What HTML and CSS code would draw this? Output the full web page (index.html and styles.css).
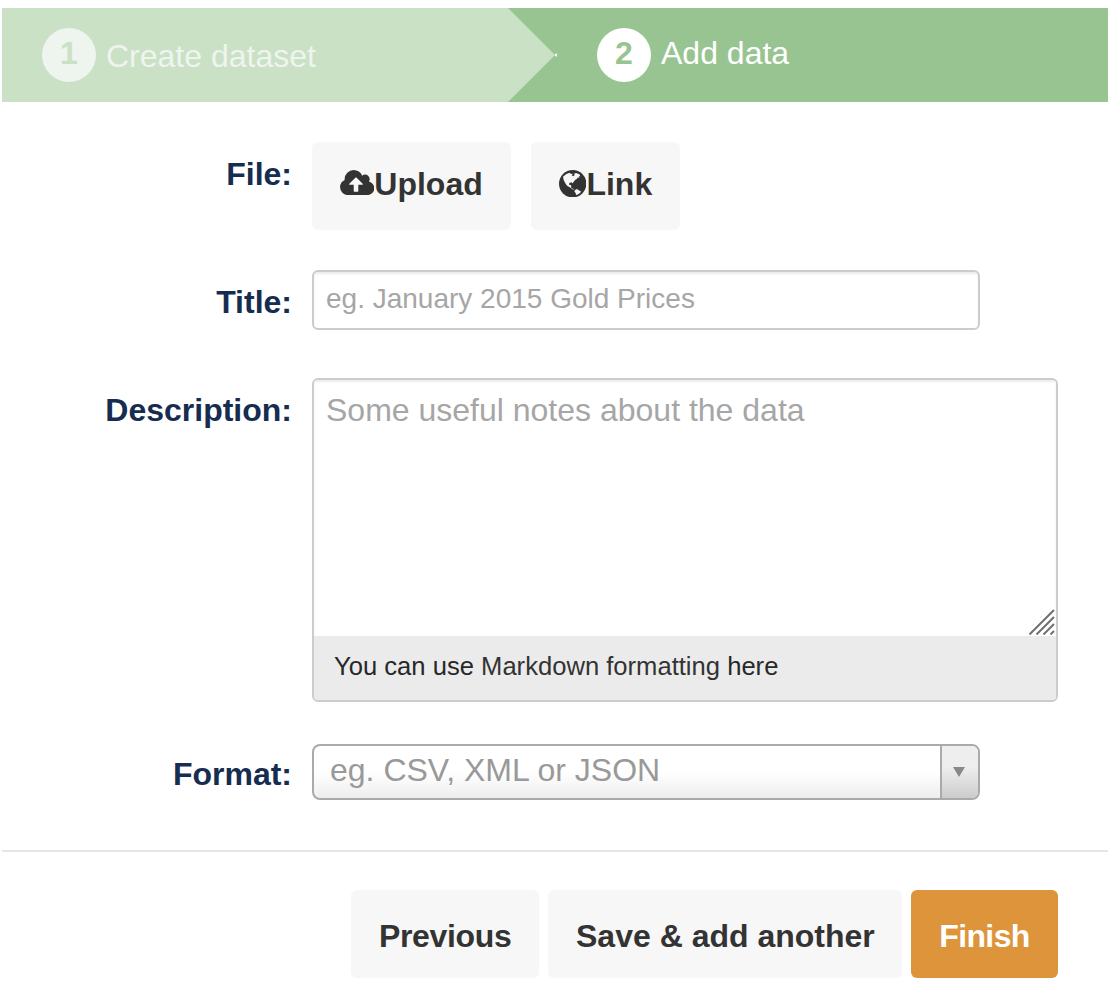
FILE: index.html
```html
<!DOCTYPE html>
<html lang="en">
<head>
<meta charset="utf-8">
<title>Add data</title>
<link rel="stylesheet" href="styles.css">
</head>
<body>
<main class="page">
  <ol class="stages">
    <li class="stage stage-done"><span class="number">1</span><span class="stage-name">Create dataset</span></li>
    <li class="stage stage-active">
      <svg class="arrow" viewBox="0 0 50 94"><path class="arrow-fill" d="M0 0 47 47 0 94z"/><path class="arrow-tip" d="M46.500 47 48 45.500h1v3h-1z"/></svg>
      <span class="number">2</span><span class="stage-name">Add data</span>
    </li>
  </ol>
  <form class="form">
    <div class="row row-file">
      <span class="label">File:</span>
      <div class="file-buttons">
        <button type="button" class="btn btn-icon"><svg class="cloud" viewBox="0 0 1920 1408"><path fill-rule="evenodd" transform="matrix(1 0 0 -1 0 1408)" d="M1280 608q0 -14 -9 -23t-23 -9h-224v-352q0 -13 -9.500 -22.500t-22.500 -9.500h-192q-13 0 -22.500 9.500t-9.500 22.500v352h-224q-13 0 -22.500 9.500t-9.500 22.500q0 14 9 23l352 352q9 9 23 9t23 -9l351 -351q10 -12 10 -24zM1920 384q0 -159 -112.500 -271.500t-271.500 -112.500h-1088q-185 0 -316.500 131.500t-131.500 316.500q0 130 70 240t188 165q-2 30 -2 43q0 212 150 362t362 150q156 0 285.500 -87t188.500 -231q71 62 166 62q106 0 181 -75t75 -181q0 -76 -41 -138q130 -31 213.500 -135.500t83.500 -238.500z"/></svg>Upload</button>
        <button type="button" class="btn btn-icon"><svg class="globe" viewBox="0 0 82 82"><circle cx="41" cy="41" r="41"/><path class="land" d="M12 20 22 12 32 8 36 12 42 11 38 16 43 19 47 15 45 11 51 9 61 13 64 19 59 18 62 22 56 23 53 27 48 30 44 35 41 40 37 37 31 39 30 44 35 45 37 49 36 53 42 56 47 60 41 58 32 52 24 47 18 38 14 30zM48 60 54 57 60 61 66 64 63 69 56 73 51 75 50 69 46 65z"/></svg>Link</button>
      </div>
    </div>
    <div class="row row-title">
      <label class="label" for="title">Title:</label>
      <input class="input" id="title" type="text" placeholder="eg. January 2015 Gold Prices">
    </div>
    <div class="row row-description">
      <label class="label" for="description">Description:</label>
      <div class="editor">
        <div class="editor-area">
          <textarea class="textarea" id="description" placeholder="Some useful notes about the data"></textarea>
          <svg class="grip" viewBox="0 0 26 26"><path d="M.5 25.500 25 1M7.500 25.500 25 8M14.500 25.500 25 15M21.500 25.500 25 22"/></svg>
        </div>
        <div class="editor-info">You can use <a class="help">Markdown formatting</a> here</div>
      </div>
    </div>
    <div class="row row-format">
      <span class="label">Format:</span>
      <div class="select"><span class="select-text">eg. CSV, XML or JSON</span><span class="select-arrow"><svg class="caret" viewBox="0 0 12 10"><path d="M0 0h12L6 10z"/></svg></span></div>
    </div>
    <div class="actions">
      <button type="button" class="btn btn-previous">Previous</button>
      <button type="button" class="btn btn-again">Save &amp; add another</button>
      <button type="button" class="btn btn-finish">Finish</button>
    </div>
  </form>
</main>
</body>
</html>
```

FILE: styles.css
```css
* { box-sizing: border-box; }

body {
  margin: 0;
  background: #fff;
  color: #333;
  font: 32px/40px "Liberation Sans", Arial, sans-serif;
}

.page { padding: 8px 10px 0 2px; }

.stages {
  display: flex;
  height: 94px;
  margin: 0;
  padding: 0;
  list-style: none;
  color: #fff;
}

.stage { display: flex; padding: 20px 0 0 40px; }
.stage-done { width: 506px; background: #cae1c6; color: #eef4ee; }
.stage-active { position: relative; flex: 1; padding-left: 89px; background: #98c491; }

.number {
  width: 54px;
  height: 54px;
  border-radius: 50%;
  background: #fff;
  color: #98c491;
  font-weight: bold;
  line-height: 51px;
  text-align: center;
}
.stage-done .number { background: #eef4ee; color: #cae1c6; }
.stage-name { margin-left: 10px; line-height: 51px; }
.stage-done .stage-name { line-height: 57px; }

.arrow { position: absolute; top: 0; left: 0; width: 50px; height: 94px; }
.arrow-fill { fill: #cae1c6; }
.arrow-tip { fill: #fff; }

.row { display: flex; gap: 20px; }
.row-file { margin-top: 40px; height: 88px; }
.row-title { margin-top: 40px; height: 60px; }
.row-description { margin-top: 48px; height: 324px; }
.row-format { margin-top: 42px; height: 56px; }

.label {
  width: 290px;
  padding-top: 12px;
  color: #162d50;
  font-weight: bold;
  text-align: right;
}
.row-format .label { padding-top: 10px; }

.file-buttons { display: flex; gap: 20px; }

.btn {
  height: 88px;
  padding: 4px 28px 0;
  border: 0;
  border-radius: 6px;
  background: #f7f7f7;
  color: #333;
  font: bold 32px/40px "Liberation Sans", Arial, sans-serif;
  white-space: nowrap;
}
.btn-icon { display: flex; align-items: flex-start; padding-top: 22px; }
.btn-icon:first-child { width: 199px; }
.btn-icon:last-child { width: 149px; }
.cloud { flex: none; width: 34.3px; height: 25.1px; margin-top: 6px; fill: #333; }
.globe { flex: none; width: 27.4px; height: 27.4px; margin-top: 6px; fill: #333; }
.land { fill: #f7f7f7; }

.input {
  width: 668px;
  height: 60px;
  padding: 0 12px 2px;
  border: 2px solid #ccc;
  border-radius: 6px;
  box-shadow: inset 0 2px 2px rgba(0, 0, 0, 0.075);
  font: 28px/40px "Liberation Sans", Arial, sans-serif;
}
.input::placeholder, .textarea::placeholder { color: #a6a6a6; opacity: 1; }

.editor {
  display: flex;
  flex-direction: column;
  width: 746px;
  height: 324px;
  overflow: hidden;
  border: 2px solid #ccc;
  border-radius: 6px;
}
.editor-area { position: relative; height: 256px; }
.textarea {
  display: block;
  width: 100%;
  height: 100%;
  padding: 10px 12px;
  border: 0;
  resize: none;
  box-shadow: inset 0 2px 2px rgba(0, 0, 0, 0.075);
  font: 32px/40px "Liberation Sans", Arial, sans-serif;
}
.grip {
  position: absolute;
  right: 1px;
  bottom: 1px;
  width: 26px;
  height: 26px;
  fill: none;
  stroke: #707070;
  stroke-width: 2;
}
.editor-info {
  flex: 1;
  padding: 10px 20px;
  background: #ebebeb;
  color: #282828;
  font-size: 25.6px;
}
.help { color: #333; }

.select {
  display: flex;
  width: 668px;
  height: 56px;
  overflow: hidden;
  border: 2px solid #aaa;
  border-radius: 8px;
  background: linear-gradient(#fff 50%, #eee);
  color: #999;
}
.select-text { flex: 1; padding: 4px 16px; }
.select-arrow {
  display: flex;
  width: 38px;
  padding: 21px 0 0 11px;
  border-left: 2px solid #aaa;
  background: linear-gradient(#eee 40%, #ccc);
}
.caret { width: 12px; height: 10px; fill: #888; }

.actions {
  display: flex;
  justify-content: flex-end;
  gap: 9px;
  margin-top: 50px;
  padding: 38px 50px 0 0;
  border-top: 2px solid #e5e5e5;
}
.btn-previous { width: 188px; letter-spacing: -0.35px; }
.btn-again { width: 354px; }
.btn-finish { width: 147px; background: #dd943b; color: #fff; letter-spacing: -0.6px; }
```
